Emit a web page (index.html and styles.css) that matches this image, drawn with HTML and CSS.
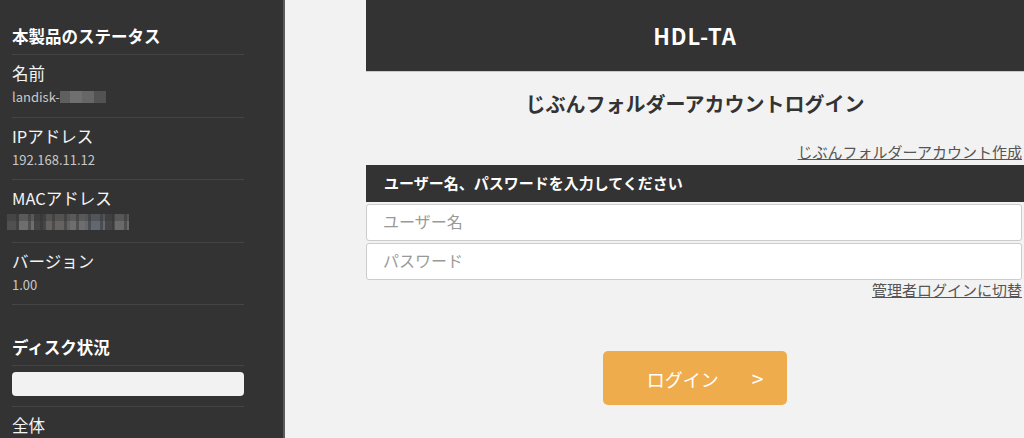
FILE: index.html
```html
<!DOCTYPE html>
<html lang="ja">

<head>
    <meta charset="UTF-8">
    <meta name="viewport" content="width=device-width, initial-scale=1.0">
    <title>HDL-TA ログイン</title>
    <link rel="stylesheet" href="styles.css">
</head>

<body>

    <div class="sidebar">
        <div class="side-title">本製品のステータス</div>
        <div class="side-item">
            <div class="side-label">名前</div>
            <div class="side-value">landisk-<span class="mosaic mosaic-name"></span></div>
        </div>
        <div class="side-item">
            <div class="side-label">IPアドレス</div>
            <div class="side-value">192.168.11.12</div>
        </div>
        <div class="side-item">
            <div class="side-label">MACアドレス</div>
            <div class="side-value"><span class="mosaic mosaic-mac"></span></div>
        </div>
        <div class="side-item">
            <div class="side-label">バージョン</div>
            <div class="side-value">1.00</div>
        </div>

        <div class="side-title disk-title">ディスク状況</div>
        <div class="disk-row">
            <div class="disk-bar"></div>
        </div>
        <div class="side-item">
            <div class="side-label">全体</div>
        </div>
    </div>

    <div class="main">
        <div class="container">
            <div class="header">HDL-TA</div>

            <h1 class="login-title">じぶんフォルダーアカウントログイン</h1>

            <div class="link-row">
                <a href="#" class="text-link">じぶんフォルダーアカウント作成</a>
            </div>

            <div class="form-bar">ユーザー名、パスワードを入力してください</div>
            <input type="text" class="field" placeholder="ユーザー名">
            <input type="password" class="field" placeholder="パスワード">

            <div class="link-row">
                <a href="#" class="text-link">管理者ログインに切替</a>
            </div>

            <div class="button-row">
                <button class="login-button">ログイン<span class="arrow">&gt;</span></button>
            </div>
        </div>
    </div>

</body>

</html>
```

FILE: styles.css
```css
html,
body {
    margin: 0;
    padding: 0;
    height: 100%;
    overflow: hidden;
}

body {
    font-family: "Noto Sans CJK JP", "Noto Sans", sans-serif;
    display: flex;
    background-color: #f2f2f2;
    color: #333;
}

/* sidebar */

.sidebar {
    width: 271px;
    flex-shrink: 0;
    padding-left: 12px;
    background-color: #333;
    border-right: 2px solid #5c5c5c;
    color: #fff;
}

.side-title,
.side-item,
.disk-row {
    width: 232px;
    border-bottom: 1px solid #444;
}

.side-title {
    padding: 24px 0 6px;
    font-size: 16.5px;
    font-weight: bold;
    line-height: 24px;
}

.disk-title {
    margin-top: 6px;
}

.side-item {
    padding: 6px 0 9.5px;
}

.side-label {
    font-size: 16.5px;
    line-height: 24px;
    color: #f4f4f4;
}

.side-value {
    margin-top: 2px;
    height: 20px;
    font-size: 13px;
    line-height: 20px;
    color: #c8c8c8;
    display: flex;
    align-items: center;
}

.mosaic {
    display: inline-block;
}

.mosaic-name {
    width: 46px;
    height: 12px;
    background: linear-gradient(90deg, #6a6a6a 0 22%, #7e7e7e 22% 48%, #737373 48% 74%, #5a5a5a 74% 100%);
    opacity: 0.8;
}

.mosaic-mac {
    width: 122px;
    height: 16px;
    margin-left: -5px;
    background:
        linear-gradient(180deg, rgba(51, 51, 51, 0.35) 0 45%, transparent 45% 100%),
        repeating-linear-gradient(90deg, transparent 0 9px, rgba(51, 51, 51, 0.5) 9px 12px),
        linear-gradient(90deg, #505050 0 10%, #6e6e6e 10% 22%, #454545 22% 32%, #676262 32% 52%, #6e6e6e 52% 64%, #626770 64% 80%, #454545 80% 88%, #6a6a6a 88% 100%);
}

.disk-row {
    padding: 6px 0 10px;
}

.disk-bar {
    height: 24px;
    background-color: #f2f2f2;
    border-radius: 4px;
}

/* main */

.main {
    flex: 1;
    padding-left: 81px;
}

.container {
    width: 658px;
}

.header {
    height: 71px;
    line-height: 71px;
    background-color: #333;
    border-bottom: 1px solid #c8c8c8;
    color: #fff;
    text-align: center;
    font-size: 22px;
    font-weight: bold;
    letter-spacing: 1px;
}

.login-title {
    margin: 18px 0 0;
    font-size: 20px;
    line-height: 28px;
    text-align: center;
    color: #333;
}

.link-row {
    text-align: right;
    font-size: 15px;
    line-height: 20px;
    padding-right: 2px;
}

.login-title + .link-row {
    margin-top: 24px;
}

.text-link {
    color: #555;
}

.form-bar {
    margin-top: 3px;
    height: 37px;
    line-height: 36px;
    padding-left: 18px;
    background-color: #333;
    color: #fff;
    font-size: 15px;
    font-weight: bold;
}

.field {
    display: block;
    box-sizing: border-box;
    width: 656px;
    height: 37px;
    margin-top: 2px;
    padding: 0 16px 3px;
    border: 1px solid #ccc;
    border-radius: 3px;
    background-color: #fff;
    font-family: inherit;
    font-size: 16px;
}

.field::placeholder {
    color: #999;
}

.button-row {
    margin-top: 51px;
    text-align: center;
}

.login-button {
    width: 184px;
    height: 54px;
    padding: 0 0 0 20px;
    border: none;
    border-radius: 5px;
    background-color: #efac4d;
    color: #fff;
    font-family: inherit;
    font-size: 18px;
    cursor: pointer;
}

.arrow {
    margin-left: 33px;
    font-size: 21px;
}
```
